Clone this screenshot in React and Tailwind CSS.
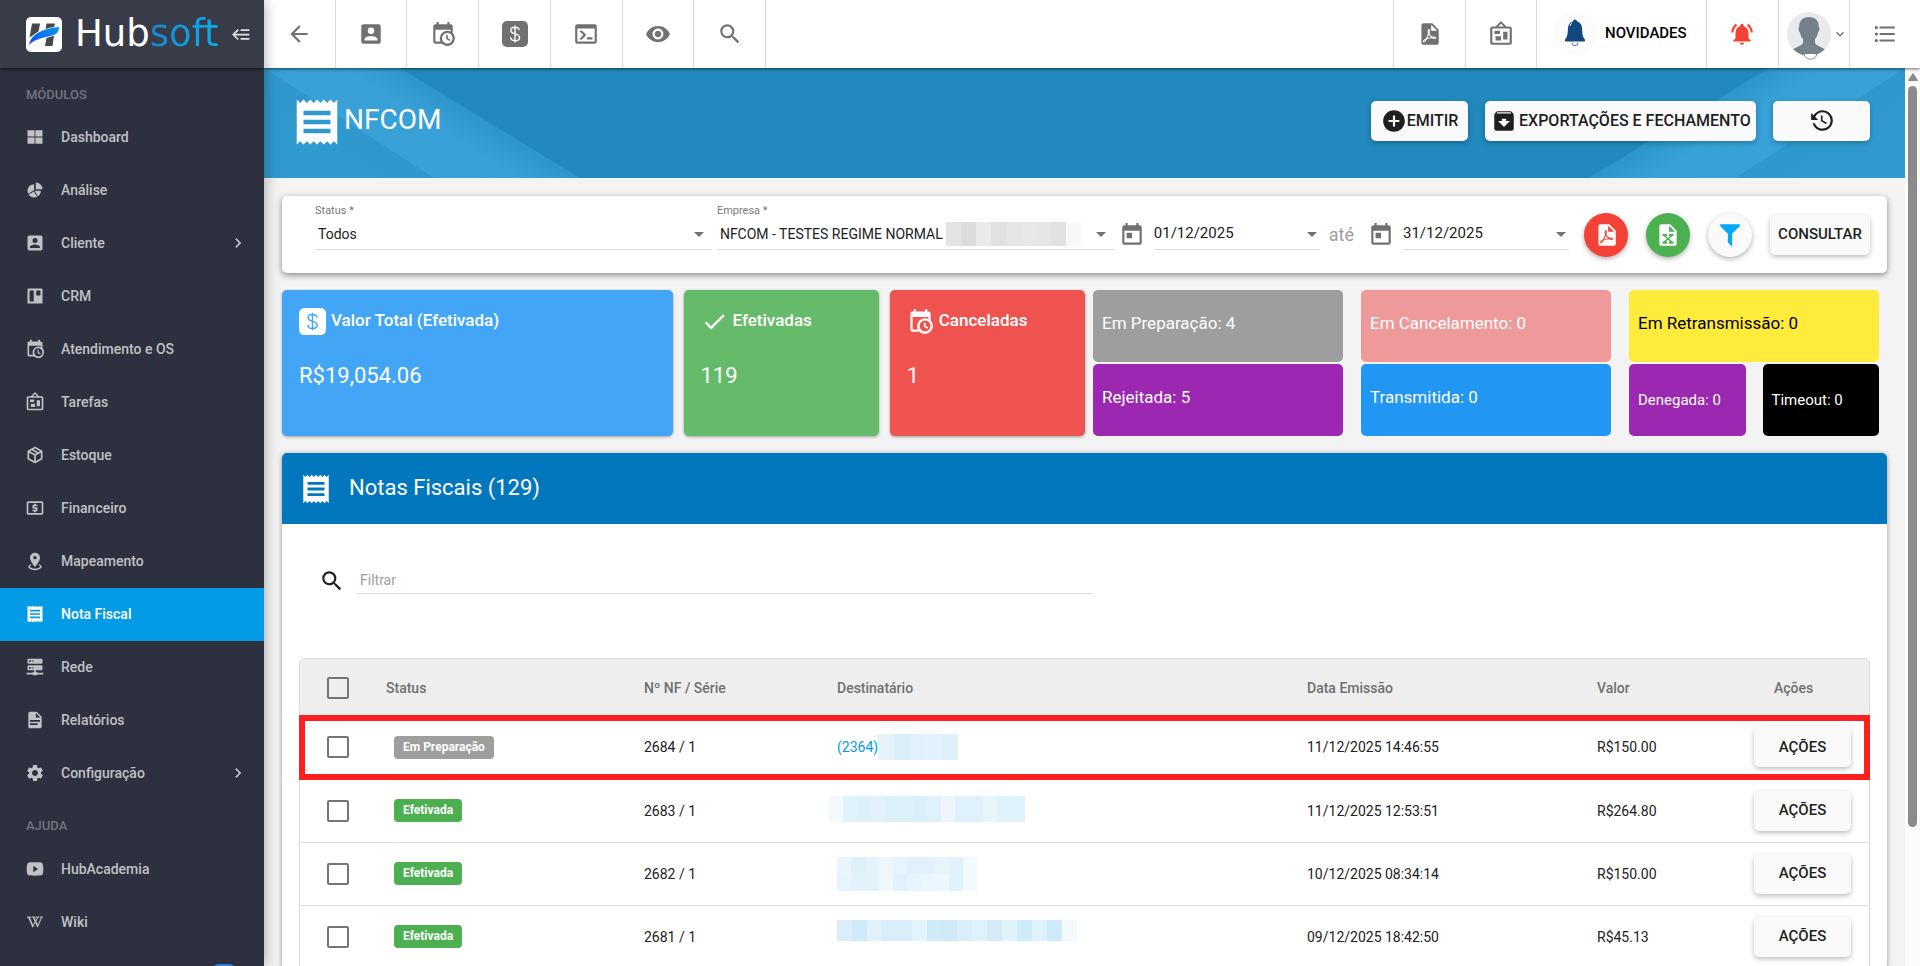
import React from "react";
import {
  MdAddCircle,
  MdArchive,
  MdArrowBack,
  MdArrowDropDown,
  MdCheck,
  MdChevronRight,
  MdFormatListBulleted,
  MdKeyboardArrowDown,
  MdLocalAtm,
  MdNotificationsActive,
  MdReceipt,
  MdSearch,
  MdSettings,
  MdVisibility,
} from "react-icons/md";
import { FaWikipediaW } from "react-icons/fa";

const icon = (d) =>
  function Icon({ className }) {
    return (
      <svg viewBox="0 0 24 24" className={className} fill="currentColor" aria-hidden="true">
        <path d={d} />
      </svg>
    );
  };

const Backburger = icon("M5,13L9,17L7.6,18.42L1.18,12L7.6,5.58L9,7L5,11H21V13H5M21,6V8H11V6H21M21,16V18H11V16H21Z");
const Windows = icon("M3,4H11.5V11.5H3V4M12.5,4H21V11.5H12.5V4M3,12.5H11.5V20H3V12.5M12.5,12.5H21V20H12.5V12.5Z");
const ChartPie = icon("M21,11H13V3A8,8 0 0,1 21,11M19,13C19,15.78 17.58,18.23 15.43,19.67L11.58,13H19M11,21C8.22,21 5.77,19.58 4.33,17.43L10.82,13.68L14.56,20.17C13.5,20.7 12.28,21 11,21M3,13A8,8 0 0,1 11,5V12.42L3.83,16.56C3.3,15.5 3,14.28 3,13Z");
const AccountBox = icon("M6,17C6,15 10,13.9 12,13.9C14,13.9 18,15 18,17V18H6M15,9A3,3 0 0,1 12,12A3,3 0 0,1 9,9A3,3 0 0,1 12,6A3,3 0 0,1 15,9M3,5V19A2,2 0 0,0 5,21H19A2,2 0 0,0 21,19V5A2,2 0 0,0 19,3H5C3.89,3 3,3.9 3,5Z");
const Board = icon("M4,3H20A1,1 0 0,1 21,4V20A1,1 0 0,1 20,21H4A1,1 0 0,1 3,20V4A1,1 0 0,1 4,3M5.5,6V18A.5,.5 0 0,0 6,18.5H10A.5,.5 0 0,0 10.5,18V6A.5,.5 0 0,0 10,5.5H6A.5,.5 0 0,0 5.5,6M13.5,6V11A.5,.5 0 0,0 14,11.5H18A.5,.5 0 0,0 18.5,11V6A.5,.5 0 0,0 18,5.5H14A.5,.5 0 0,0 13.5,6Z");
const CalendarClock = icon("M15,13H16.5V15.82L18.94,17.23L18.19,18.53L15,16.69V13M19,8H5V19H9.67C9.24,18.09 9,17.07 9,16A7,7 0 0,1 16,9C17.07,9 18.09,9.24 19,9.67V8M5,21C3.89,21 3,20.1 3,19V5C3,3.89 3.89,3 5,3H6V1H8V3H16V1H18V3H19A2,2 0 0,1 21,5V11.1C22.24,12.36 23,14.09 23,16A7,7 0 0,1 16,23C14.09,23 12.36,22.24 11.1,21H5M16,11.15A4.85,4.85 0 0,0 11.15,16C11.15,18.68 13.32,20.85 16,20.85A4.85,4.85 0 0,0 20.85,16C20.85,13.32 18.68,11.15 16,11.15Z");
const Bulletin = icon("M12.04,2.5L9.53,5H14.53L12.04,2.5M4,7V20H20V7H4M12,0L17,5V5H20A2,2 0 0,1 22,7V20A2,2 0 0,1 20,22H4A2,2 0 0,1 2,20V7A2,2 0 0,1 4,5H7V5L12,0M7,18V14H12V18H7M14,17V10H18V17H14M6,12V9H11V12H6Z");
const Package = icon("M21,16.5C21,16.88 20.79,17.21 20.47,17.38L12.57,21.82C12.41,21.94 12.21,22 12,22C11.79,22 11.59,21.94 11.43,21.82L3.53,17.38C3.21,17.21 3,16.88 3,16.5V7.5C3,7.12 3.21,6.79 3.53,6.62L11.43,2.18C11.59,2.06 11.79,2 12,2C12.21,2 12.41,2.06 12.57,2.18L20.47,6.62C20.79,6.79 21,7.12 21,7.5V16.5M12,4.15L10.11,5.22L16,8.61L17.96,7.5L12,4.15M6.04,7.5L12,10.85L13.96,9.75L8.08,6.35L6.04,7.5M5,15.91L11,19.29V12.58L5,9.21V15.91M19,15.91V9.21L13,12.58V19.29L19,15.91Z");
const MapPin = icon("M12,2C15.31,2 18,4.66 18,7.95C18,12.41 12,19 12,19C12,19 6,12.41 6,7.95C6,4.66 8.69,2 12,2M12,6A2,2 0 0,0 10,8A2,2 0 0,0 12,10A2,2 0 0,0 14,8A2,2 0 0,0 12,6M20,19C20,21.21 16.42,23 12,23C7.58,23 4,21.21 4,19C4,17.71 5.22,16.56 7.11,15.83L7.75,16.74C6.67,17.19 6,17.81 6,18.5C6,19.88 8.69,21 12,21C15.31,21 18,19.88 18,18.5C18,17.81 17.33,17.19 16.25,16.74L16.89,15.83C18.78,16.56 20,17.71 20,19Z");
const Server = icon("M13,18H14A1,1 0 0,1 15,19H22V21H15A1,1 0 0,1 14,22H10A1,1 0 0,1 9,21H2V19H9A1,1 0 0,1 10,18H11V16H4A1,1 0 0,1 3,15V11A1,1 0 0,1 4,10H20A1,1 0 0,1 21,11V15A1,1 0 0,1 20,16H13V18M4,2H20A1,1 0 0,1 21,3V7A1,1 0 0,1 20,8H4A1,1 0 0,1 3,7V3A1,1 0 0,1 4,2M9,6H10V4H9V6M9,14H10V12H9V14M5,4V6H7V4H5M5,12V14H7V12H5Z");
const FileDoc = icon("M13,9H18.5L13,3.5V9M6,2H14L20,8V20A2,2 0 0,1 18,22H6C4.89,22 4,21.1 4,20V4C4,2.89 4.89,2 6,2M15,18V16H6V18H15M18,14V12H6V14H18Z");
const Youtube = icon("M10,16V8L15.5,12M20,4.4C19.4,4.2 15.7,4 12,4C8.3,4 4.6,4.19 4,4.38C2.44,4.9 2,8.4 2,12C2,15.59 2.44,19.1 4,19.61C4.6,19.81 8.3,20 12,20C15.7,20 19.4,19.81 20,19.61C21.56,19.1 22,15.59 22,12C22,8.4 21.56,4.91 20,4.4Z");
const Console = icon("M20,19V7H4V19H20M20,3A2,2 0 0,1 22,5V19A2,2 0 0,1 20,21H4A2,2 0 0,1 2,19V5C2,3.89 2.9,3 4,3H20M13,17V15H18V17H13M9.58,13L5.57,9H8.4L11.7,12.3C12.09,12.69 12.09,13.33 11.7,13.72L8.42,17H5.59L9.58,13Z");
const FilePdf = icon("M14,9H19.5L14,3.5V9M7,2H15L21,8V20A2,2 0 0,1 19,22H7C5.89,22 5,21.1 5,20V4A2,2 0 0,1 7,2M11.93,12.44C12.34,13.34 12.86,14.08 13.46,14.59L13.87,14.91C13,15.07 11.8,15.35 10.53,15.84V15.84L10.42,15.88L10.92,14.84C11.37,13.97 11.7,13.18 11.93,12.44M18.41,16.25C18.59,16.07 18.68,15.84 18.69,15.59C18.72,15.39 18.67,15.2 18.57,15.04C18.28,14.57 17.53,14.35 16.29,14.35L15,14.42L14.13,13.84C13.5,13.32 12.93,12.41 12.53,11.28L12.57,11.14C12.9,9.81 13.21,8.2 12.55,7.54C12.39,7.38 12.17,7.3 11.94,7.3H11.7C11.33,7.3 11,7.69 10.91,8.07C10.54,9.4 10.76,10.13 11.13,11.34V11.35C10.88,12.23 10.56,13.25 10.05,14.28L9.09,16.08L8.2,16.57C7,17.32 6.43,18.16 6.32,18.69C6.28,18.88 6.3,19.05 6.37,19.23L6.4,19.28L6.88,19.59L7.32,19.7C8.13,19.7 9.05,18.75 10.29,16.63L10.47,16.56C11.5,16.23 12.78,16 14.5,15.81C15.53,16.32 16.74,16.55 17.5,16.55C17.94,16.55 18.24,16.44 18.41,16.25M18,15.54L18.09,15.65C18.08,15.75 18.05,15.76 18,15.78H17.96L17.77,15.8C17.31,15.8 16.6,15.61 15.87,15.29C15.96,15.19 16,15.19 16.1,15.19C17.5,15.19 17.9,15.44 18,15.54M8.83,17C8.18,18.19 7.59,18.85 7.14,19C7.19,18.62 7.64,17.96 8.35,17.31L8.83,17M11.85,10.09C11.62,9.19 11.61,8.46 11.78,8.04L11.85,7.92L12,7.97C12.17,8.21 12.19,8.53 12.09,9.07L12.06,9.23L11.9,10.05L11.85,10.09Z");
const FileExcel = icon("M6,2H14L20,8V20A2,2 0 0,1 18,22H6A2,2 0 0,1 4,20V4A2,2 0 0,1 6,2M13,3.5V9H18.5L13,3.5M17,11H13V13H14L12,14.67L10,13H11V11H7V13H8L11,15.5L8,18H7V20H11V18H10L12,16.33L14,18H13V20H17V18H16L13,15.5L16,13H17V11Z");
const Filter = icon("M3,2H21V4H20.92L14,10.92V22.91L10,18.91V10.91L3.09,4H3V2Z");
const CalendarToday = icon("M7,10H12V15H7M19,19H5V8H19M19,3H18V1H16V3H8V1H6V3H5C3.89,3 3,3.9 3,5V19A2,2 0 0,0 5,21H19A2,2 0 0,0 21,19V5A2,2 0 0,0 19,3Z");
const History = icon("M11,7V12.11L15.71,14.9L16.5,13.62L12.5,11.25V7M12.5,2C8.97,2 5.91,3.92 4.27,6.77L2,4.5V11H8.5L5.75,8.25C6.96,5.73 9.5,4 12.5,4A7.5,7.5 0 0,1 20,11.5A7.5,7.5 0 0,1 12.5,19C9.23,19 6.47,16.91 5.44,14H3.34C4.44,18.03 8.11,21 12.5,21C17.74,21 22,16.75 22,11.5A9.5,9.5 0 0,0 12.5,2Z");

function WikiIcon() {
  return (
    <span className="flex size-5 shrink-0 items-center justify-center">
      <FaWikipediaW className="size-4" stroke="currentColor" strokeWidth={16} />
    </span>
  );
}

function DollarBox({ className, sign }) {
  return (
    <svg viewBox="0 0 26 26" className={className} aria-hidden="true">
      <rect width="26" height="26" rx="5" fill="currentColor" />
      <path
        d="M13 4.5v17M17.2 9.2c-.2-1.700-1.900-2.900-4.200-2.900-2.400 0-4.200 1.200-4.200 3.100 0 4.500 8.700 2.400 8.700 7 0 2-1.900 3.300-4.400 3.300-2.600 0-4.500-1.300-4.600-3.400"
        fill="none"
        className={sign}
        strokeWidth="1.400"
      />
    </svg>
  );
}

function Logo() {
  return (
    <svg viewBox="0 0 36 35" className="h-[35px] w-9 shrink-0" aria-hidden="true">
      <defs>
        <linearGradient id="swoosh" x1="0" y1="1" x2="1" y2="0">
          <stop offset="0" stopColor="#0a46ff" />
          <stop offset="1" stopColor="#079fe6" />
        </linearGradient>
      </defs>
      <rect width="36" height="35" rx="5" fill="#fff" />
      <path d="M6 6.500h8L12.500 14.500 3.500 20.500Z" fill="#484848" />
      <path d="M20.500 6.500h8.500l-1 4-8.500 2Z" fill="#484848" />
      <path d="M20.500 21l7.500-2.500L26.500 29h-7.500Z" fill="#484848" />
      <path d="M2.500 29C4 18 14 11.500 33.500 9.500c-.3 3-1 5.500-2.500 7-3 2.200-8 3.200-13 4.200C11 22.500 6 24.500 2.500 29Z" fill="url(#swoosh)" stroke="#fff" strokeWidth="0.600" />
    </svg>
  );
}

const modules = [
  ["Dashboard", Windows],
  ["Análise", ChartPie],
  ["Cliente", AccountBox, true],
  ["CRM", Board],
  ["Atendimento e OS", CalendarClock],
  ["Tarefas", Bulletin],
  ["Estoque", Package],
  ["Financeiro", MdLocalAtm],
  ["Mapeamento", MapPin],
  ["Nota Fiscal", MdReceipt],
  ["Rede", Server],
  ["Relatórios", FileDoc],
  ["Configuração", MdSettings, true],
];
const help = [
  ["HubAcademia", Youtube],
  ["Wiki", WikiIcon],
];

function NavItem({ label, Icon, more }) {
  const active = label === "Nota Fiscal";
  return (
    <li>
      <a
        href="#"
        aria-current={active ? "page" : undefined}
        className={`flex h-[53px] items-center gap-4 pr-4 pb-px pl-[25px] text-sm font-medium ${
          active ? "bg-[#039be5] text-white" : "text-[#c0c1c5]"
        }`}
      >
        <Icon className="size-5 shrink-0" />
        <span className="flex-1">{label}</span>
        {more && <MdChevronRight className="size-5" />}
      </a>
    </li>
  );
}

function Sidebar() {
  return (
    <aside className="z-20 flex w-[264px] shrink-0 flex-col overflow-hidden bg-[#2d303e] shadow-[0_0_14px_rgba(0,0,0,0.35)]">
      <div className="z-10 flex h-[68px] shrink-0 items-center bg-[#383b48] pr-3 pl-[26px] shadow-[0_1px_3px_rgba(0,0,0,0.6)]">
        <Logo />
        <div className="ml-[13px] flex-1 pb-0.5 font-['DejaVu_Sans',sans-serif] text-[37px] leading-none text-white">
          Hub<span className="bg-linear-to-r from-[#1a84cb] to-[#06b0ea] bg-clip-text text-transparent">soft</span>
        </div>
        <button type="button" aria-label="Recolher menu" className="text-[#e1e1e3]">
          <Backburger className="size-[21px]" />
        </button>
      </div>
      <nav className="flex flex-col">
        <h2 className="h-[43px] pt-[17px] pl-[26px] text-[13px] leading-5 font-medium text-[#72747e]">MÓDULOS</h2>
        <ul>
          {modules.map(([label, Icon, more]) => (
            <NavItem key={label} label={label} Icon={Icon} more={more} />
          ))}
        </ul>
        <h2 className="h-[43px] pt-4 pl-[26px] text-[13px] leading-5 font-medium text-[#72747e]">AJUDA</h2>
        <ul>
          {help.map(([label, Icon]) => (
            <NavItem key={label} label={label} Icon={Icon} />
          ))}
        </ul>
        <button type="button" aria-label="Suporte" className="mt-[15px] mr-6 h-9 w-8 self-end rounded-xl bg-[#3b7bdc]" />
      </nav>
    </aside>
  );
}

function TopButton({ label, side, children }) {
  return (
    <button
      type="button"
      aria-label={label}
      className={`flex flex-1 items-center justify-center border-[#dcdcdc] ${side === "right" ? "border-l" : "border-r"}`}
    >
      {children}
    </button>
  );
}

function TopBar() {
  return (
    <header className="z-10 flex h-[68px] shrink-0 justify-between bg-white text-[#717171] shadow-[0_1px_3px_rgba(0,0,0,0.6)]">
      <div className="flex w-[502px]">
        <TopButton label="Voltar"><MdArrowBack className="size-[26px]" /></TopButton>
        <TopButton label="Clientes"><AccountBox className="size-[26px]" /></TopButton>
        <TopButton label="Agenda"><CalendarClock className="size-[26px]" /></TopButton>
        <TopButton label="Financeiro"><DollarBox className="size-[26px]" sign="stroke-white" /></TopButton>
        <TopButton label="Console"><Console className="size-[26px]" /></TopButton>
        <TopButton label="Visualizar"><MdVisibility className="size-[26px]" /></TopButton>
        <TopButton label="Buscar"><MdSearch className="size-[26px]" /></TopButton>
      </div>
      <div className="flex w-[527px]">
        <TopButton label="PDF" side="right"><FilePdf className="size-[26px]" /></TopButton>
        <TopButton label="Tarefas" side="right"><Bulletin className="size-[26px]" /></TopButton>
        <button type="button" className="flex w-[170px] items-center border-l border-[#dcdcdc] pb-0.5 pl-4 text-[15px] font-medium text-black">
          <span className="mr-2 flex size-11 items-center justify-center rounded-full bg-[#fcfcfc]">
            <svg viewBox="0 0 22 28" className="h-7 w-[22px]" aria-hidden="true">
              <path d="M11 0.500a2 2 0 0 1 2 1.700c3 .8 4.800 3.300 5 6.800.3 6 .6 8.500 2.500 11 .8 1 .8 2.500-.5 2.500H2c-1.300 0-1.300-1.500-.5-2.500C3.400 17.500 3.700 15 4 9c.2-3.500 2-6 5-6.800a2 2 0 0 1 2-1.700Z" fill="#12487f" />
              <path d="M6 7c.2-1.500.9-2.600 2-3.200" fill="none" stroke="#fff" strokeWidth="1" />
              <path d="M8 23.500a3 3.200 0 0 0 6 0" fill="none" stroke="#4f7bab" strokeWidth="1" />
            </svg>
          </span>
          NOVIDADES
        </button>
        <TopButton label="Notificações" side="right"><MdNotificationsActive className="size-[26px] text-[#f44336]" /></TopButton>
        <button type="button" aria-label="Perfil" className="flex w-[71px] shrink-0 items-center border-l border-[#dcdcdc] pl-2">
          <svg viewBox="0 0 44 48" className="mt-1 h-12 w-11 shrink-0" aria-hidden="true">
            <defs>
              <clipPath id="avatar"><circle cx="22" cy="22" r="22" /></clipPath>
            </defs>
            <circle cx="22" cy="22" r="22" fill="#e8eaee" />
            <g clipPath="url(#avatar)">
              <path d="M22 5c6.500 0 10 4 9.800 10 1.200.5.800 4.500-.8 5.500-.5 3-1.500 5-3 6.500v4c2 3.500 8 4 12 8v8H4v-8c4-4 10-4.500 12-8v-4c-1.500-1.500-2.500-3.500-3-6.500-1.600-1-2-5-.8-5.500C12 9 15.500 5 22 5Z" fill="#76808a" />
            </g>
            <path d="M17 42h12a6.500 6.500 0 0 1-12 0Z" fill="#fff" />
            <circle cx="23.500" cy="40.500" r="6.700" fill="none" stroke="#8c8c8c" strokeWidth="1" />
          </svg>
          <MdKeyboardArrowDown className="ml-px size-4 shrink-0" />
        </button>
        <TopButton label="Lista" side="right"><MdFormatListBulleted className="size-[26px]" /></TopButton>
      </div>
    </header>
  );
}

const raised = "rounded-[5px] bg-[#fafafa] font-medium text-[#1f1f1f] shadow-[0_2px_5px_rgba(0,0,0,0.26)]";

function Stripes({ className, id }) {
  return (
    <svg viewBox="0 0 320 110" preserveAspectRatio="none" className={className} aria-hidden="true">
      <defs>
        <linearGradient id={id} gradientUnits="userSpaceOnUse" x1="55" y1="85" x2="87" y2="34">
          <stop offset="0" stopColor="#309ace" />
          <stop offset="0.700" stopColor="#2f99ce" />
          <stop offset="1" stopColor="#2991c6" />
        </linearGradient>
        <linearGradient id={id + "b"} gradientUnits="userSpaceOnUse" x1="150" y1="100" x2="192" y2="33">
          <stop offset="0" stopColor="#38a1d7" />
          <stop offset="0.600" stopColor="#37a0d6" />
          <stop offset="1" stopColor="#2c95ca" />
        </linearGradient>
      </defs>
      <path d="M0 0H136L316 110H0Z" fill={`url(#${id}b)`} />
      <path d="M0 0L170 110H0Z" fill={`url(#${id})`} />
    </svg>
  );
}

function Banner() {
  return (
    <section className="relative flex h-[110px] shrink-0 justify-between bg-[#2189bd] pr-[35px] pl-[26px]">
      <Stripes id="sl" className="absolute top-0 left-0 h-full w-80" />
      <Stripes id="sr" className="absolute top-0 right-0 h-full w-80 -scale-x-100" />
      <div className="relative flex items-start pt-[27px] text-white">
        <MdReceipt className="size-[54px]" />
        <h1 className="pt-[5px] text-[28px] leading-10">NFCOM</h1>
      </div>
      <div className="relative flex gap-[17px] pt-[33px] text-base">
        <button type="button" className={`flex h-10 w-[97px] items-center justify-center ${raised}`}>
          <MdAddCircle className="size-[26px]" />
          EMITIR
        </button>
        <button type="button" className={`flex h-10 w-[271px] items-center gap-0.5 pl-1.5 whitespace-nowrap ${raised}`}>
          <MdArchive className="size-[26px] shrink-0" />
          EXPORTAÇÕES E FECHAMENTO
        </button>
        <button type="button" aria-label="Histórico" className={`flex h-10 w-[97px] items-center justify-center ${raised}`}>
          <History className="size-[26px]" />
        </button>
      </div>
    </section>
  );
}

function Mosaic({ colors, cell }) {
  return (
    <span className="inline-flex align-middle" aria-hidden="true">
      {colors.map((c, i) => (
        <span key={i} className={`${cell} ${c}`} />
      ))}
    </span>
  );
}

function SelectField({ id, label, value, children }) {
  return (
    <div className="flex h-[47px] min-w-0 flex-1 flex-col border-b border-[#dcdcdc]">
      <label htmlFor={id} className="text-[11px] leading-4 text-[#7a7a7a]">{label}</label>
      <div className="relative flex flex-1 items-center">
        <select id={id} className="h-[30px] w-full appearance-none bg-transparent pr-7 pl-[3px] text-sm text-[#212121]">
          <option>{value}</option>
        </select>
        {children}
        <MdArrowDropDown className="pointer-events-none absolute right-px size-6 text-[#717171]" />
      </div>
    </div>
  );
}

function DateField({ id, label, value }) {
  return (
    <div className="flex items-center">
      <CalendarToday className="size-[26px] text-[#717171]" />
      <div className="mb-px ml-[9px] flex h-8 w-[166px] items-center border-b border-[#dcdcdc]">
        <input id={id} aria-label={label} defaultValue={value} className="min-w-0 flex-1 bg-transparent text-[15px] text-[#212121]" />
        <button type="button" aria-label={`Abrir ${label}`}>
          <MdArrowDropDown className="-mr-1 size-6 text-[#717171]" />
        </button>
      </div>
    </div>
  );
}

const round = "flex size-11 items-center justify-center rounded-full shadow-[0_2px_5px_rgba(0,0,0,0.3)]";

function Filters() {
  return (
    <form className="flex h-[77px] items-center rounded-[5px] bg-white pr-[17px] pl-[33px] shadow-[0_2px_6px_rgba(0,0,0,0.45)]">
      <div className="mb-4 flex flex-1 gap-[5px]">
        <SelectField id="status" label="Status *" value="Todos" />
        <SelectField id="empresa" label="Empresa *" value="NFCOM - TESTES REGIME NORMAL">
          <span className="absolute left-[229px] flex">
            <Mosaic
              cell="h-6 w-[15px]"
              colors={["bg-[#e4e4e4]", "bg-[#dcdcdc]", "bg-[#eaeaea]", "bg-[#e1e1e1]", "bg-[#e5e5e5]", "bg-[#e7e7e7]", "bg-[#e5e5e5]", "bg-[#e2e2e2]", "bg-[#f8f8f8]"]}
            />
          </span>
        </SelectField>
      </div>
      <div className="ml-[5px] flex items-center">
        <DateField id="inicio" label="data inicial" value="01/12/2025" />
        <span className="mr-[14px] ml-[9px] text-lg leading-6 text-[#9e9e9e]">até</span>
        <DateField id="fim" label="data final" value="31/12/2025" />
      </div>
      <div className="ml-[15px] flex items-center gap-[18px]">
        <button type="button" aria-label="Exportar PDF" className={`bg-[#f44336] text-white ${round}`}><FilePdf className="size-[26px]" /></button>
        <button type="button" aria-label="Exportar Excel" className={`bg-[#4caf50] text-white ${round}`}><FileExcel className="size-[26px]" /></button>
        <button type="button" aria-label="Filtros" className={`bg-[#fafafa] text-[#03a9f4] ${round}`}><Filter className="size-[26px]" /></button>
        <button type="submit" className={`h-10 w-[100px] text-[15px] ${raised}`}>CONSULTAR</button>
      </div>
    </form>
  );
}

function StatCard({ color, icon, title, value }) {
  return (
    <div className={`rounded-[5px] pt-[17px] pl-[17px] text-white shadow-[0_1px_3px_rgba(0,0,0,0.35)] ${color}`}>
      <div className="flex h-7 items-center gap-[5px] text-[17px] font-medium">
        {icon}
        {title}
      </div>
      <div className="mt-[25px] text-[22px] leading-8">{value}</div>
    </div>
  );
}

function Tile({ className, children }) {
  return <div className={`flex items-center rounded-[5px] pl-[9px] ${className}`}>{children}</div>;
}

function Stats() {
  return (
    <section className="flex h-[146px] gap-2 pr-2">
      <div className="grid flex-[803] grid-cols-[2fr_1fr_1fr] gap-[11px]">
        <StatCard color="bg-[#42a5f5]" icon={<DollarBox className="size-[27px]" sign="stroke-[#42a5f5]" />} title="Valor Total (Efetivada)" value="R$19,054.06" />
        <StatCard color="bg-[#66bb6a]" icon={<MdCheck className="size-[27px]" />} title="Efetivadas" value="119" />
        <StatCard color="bg-[#ef5350]" icon={<CalendarClock className="size-[27px]" />} title="Canceladas" value="1" />
      </div>
      <div className="grid flex-[786] grid-cols-3 grid-rows-2 gap-x-[18px] gap-y-0.5 text-[17px] text-white">
        <Tile className="bg-[#9e9e9e] pb-1">Em Preparação: 4</Tile>
        <Tile className="bg-[#ef9a9a] pb-1">Em Cancelamento: 0</Tile>
        <Tile className="bg-[#ffeb3b] pb-1 text-black">Em Retransmissão: 0</Tile>
        <Tile className="bg-[#9c27b0] pb-1">Rejeitada: 5</Tile>
        <Tile className="bg-[#2196f3] pb-1">Transmitida: 0</Tile>
        <div className="grid grid-cols-2 gap-[17px] text-[15px]">
          <Tile className="bg-[#9c27b0]">Denegada: 0</Tile>
          <Tile className="bg-black">Timeout: 0</Tile>
        </div>
      </div>
    </section>
  );
}

const rows = [
  {
    nf: "2684 / 1", draft: true, date: "11/12/2025 14:46:55", value: "R$150.00",
    to: (
      <a href="#" className="flex items-center text-[#039be5]">
        (2364)
        <Mosaic cell="h-[26px] w-4" colors={["bg-[#e6f3fb]", "bg-[#daeffa]", "bg-[#e0f1fb]", "bg-[#e3f1fc]", "bg-[#def1fb]"]} />
      </a>
    ),
  },
  {
    nf: "2683 / 1", date: "11/12/2025 12:53:51", value: "R$264.80",
    to: (
      <span className="-ml-2 flex pb-1">
        <Mosaic
          cell="h-[26px] w-3.5"
          colors={["bg-[#f4f9fe]", "bg-[#e0f2fb]", "bg-[#ddf0f9]", "bg-[#e2f1fb]", "bg-[#ddf1fb]", "bg-[#ddf1fb]", "bg-[#daeffa]", "bg-[#def1fc]", "bg-[#eef6fd]", "bg-[#def1fc]", "bg-[#def1fc]", "bg-[#e8f5fd]", "bg-[#e0f2fb]", "bg-[#e0f2fb]"]}
        />
      </span>
    ),
  },
  {
    nf: "2682 / 1", date: "10/12/2025 08:34:14", value: "R$150.00",
    to: (
      <span className="flex flex-col">
        <Mosaic
          cell="h-[17px] w-3.5"
          colors={["bg-[#e8f5fd]", "bg-[#def1fb]", "bg-[#e3f2fb]", "bg-[#eff7fb]", "bg-[#e6f4fd]", "bg-[#e1f0fb]", "bg-[#e1f0fb]", "bg-[#e8f4fc]", "bg-[#e2f1fa]", "bg-[#f3fafd]"]}
        />
        <Mosaic
          cell="h-[17px] w-3.5"
          colors={["bg-[#e6f4fd]", "bg-[#e2f2fb]", "bg-[#e2f2fb]", "bg-[#f0f7fb]", "bg-[#e1f2fc]", "bg-[#e6f4fd]", "bg-[#eaf5fc]", "bg-[#edf6fb]", "bg-[#e0f2fc]", "bg-[#f3fafd]"]}
        />
      </span>
    ),
  },
  {
    nf: "2681 / 1", date: "09/12/2025 18:42:50", value: "R$45.13",
    to: (
      <span className="flex pb-3">
        <Mosaic
          cell="h-[21px] w-[15px]"
          colors={["bg-[#d9eefa]", "bg-[#cfeaf8]", "bg-[#e1f1fb]", "bg-[#d8eefa]", "bg-[#d8eefa]", "bg-[#e3f4fc]", "bg-[#cfeaf8]", "bg-[#cfe9f8]", "bg-[#d9eefa]", "bg-[#dff2fb]", "bg-[#d6ebf9]", "bg-[#e0f2fb]", "bg-[#cfeaf8]", "bg-[#dff1fa]", "bg-[#cfeaf8]", "bg-[#f4fafd]"]}
        />
      </span>
    ),
  },
];

const checkbox = "ml-[27px] block size-[22px] appearance-none rounded-[2px] border-2 border-[#757575] bg-transparent";

function Invoices() {
  return (
    <section className="rounded-[5px] bg-white shadow-[0_1px_5px_rgba(0,0,0,0.4)]">
      <div className="flex h-[71px] items-center gap-4 rounded-t-[5px] bg-[#0277bd] pl-[17px] text-white">
        <MdReceipt className="size-[34px]" />
        <h2 className="pb-0.5 text-[22px] leading-8">Notas Fiscais (129)</h2>
      </div>
      <div className="flex h-[134px] items-start pt-[42px] pl-[37px]">
        <label htmlFor="filtrar" className="pt-0.5"><MdSearch className="size-[26px] text-[#1f1f1f]" /></label>
        <input id="filtrar" aria-label="Filtrar" placeholder="Filtrar" className="ml-[11px] h-7 w-[47%] border-b border-[#dcdcdc] bg-transparent pl-1 text-sm placeholder:text-[#9e9e9e]" />
      </div>
      <div className="mx-[17px] rounded-t-[5px] border border-b-0 border-[#dcdcdc]">
        <table className="w-full table-fixed text-left text-sm text-[#212121]">
          <thead>
            <tr className="h-[57px] bg-[#eeeeee] text-[#707070] [&>th]:font-medium">
              <th className="w-[86px]"><input type="checkbox" aria-label="Selecionar todas" className={checkbox} /></th>
              <th className="w-[258px]">Status</th>
              <th className="w-[193px]">Nº NF / Série</th>
              <th className="w-[470px]">Destinatário</th>
              <th className="w-[290px]">Data Emissão</th>
              <th className="w-[157px]">Valor</th>
              <th className="w-[115px] pl-5">Ações</th>
            </tr>
          </thead>
          <tbody>
            {rows.map((r) => (
              <tr
                key={r.nf}
                className={`h-[63px] border-b border-[#dcdcdc] ${r.draft ? "outline-[6px] -outline-offset-5 outline-[#ff1f1f] outline-solid" : ""}`}
              >
                <td><input type="checkbox" aria-label={`Selecionar ${r.nf}`} className={checkbox} /></td>
                <td>
                  <span className={`ml-2 inline-block h-[23px] rounded-[4px] px-[9px] align-middle text-xs leading-[22px] font-bold text-white ${r.draft ? "bg-[#9e9e9e]" : "bg-[#4caf50]"}`}>
                    {r.draft ? "Em Preparação" : "Efetivada"}
                  </span>
                </td>
                <td>{r.nf}</td>
                <td>{r.to}</td>
                <td>{r.date}</td>
                <td>{r.value}</td>
                <td><button type="button" className={`block h-10 w-[97px] text-[15px] ${raised}`}>AÇÕES</button></td>
              </tr>
            ))}
          </tbody>
        </table>
      </div>
    </section>
  );
}

function Scrollbar() {
  return (
    <div className="flex w-[15px] shrink-0 flex-col items-center bg-[#fcfcfc] pt-[5px]" aria-hidden="true">
      <svg viewBox="0 0 10 8" className="h-2 w-2.5"><path d="M5 0.500L9.500 7.500H0.500Z" fill="#8b8b8b" stroke="#8b8b8b" strokeLinejoin="round" /></svg>
      <div className="mt-[5px] h-[83%] w-[9px] rounded-full bg-[#8b8b8b]" />
    </div>
  );
}

export default function App() {
  return (
    <div className="flex h-screen overflow-hidden bg-[#f3f3f3] font-['Roboto',sans-serif]">
      <Sidebar />
      <div className="flex min-w-0 flex-1 flex-col">
        <TopBar />
        <div className="flex min-h-0 flex-1">
          <main className="min-w-0 flex-1 overflow-hidden">
            <Banner />
            <div className="flex flex-col gap-[17px] px-[18px] pt-[18px]">
              <Filters />
              <Stats />
              <Invoices />
            </div>
          </main>
          <Scrollbar />
        </div>
      </div>
    </div>
  );
}
